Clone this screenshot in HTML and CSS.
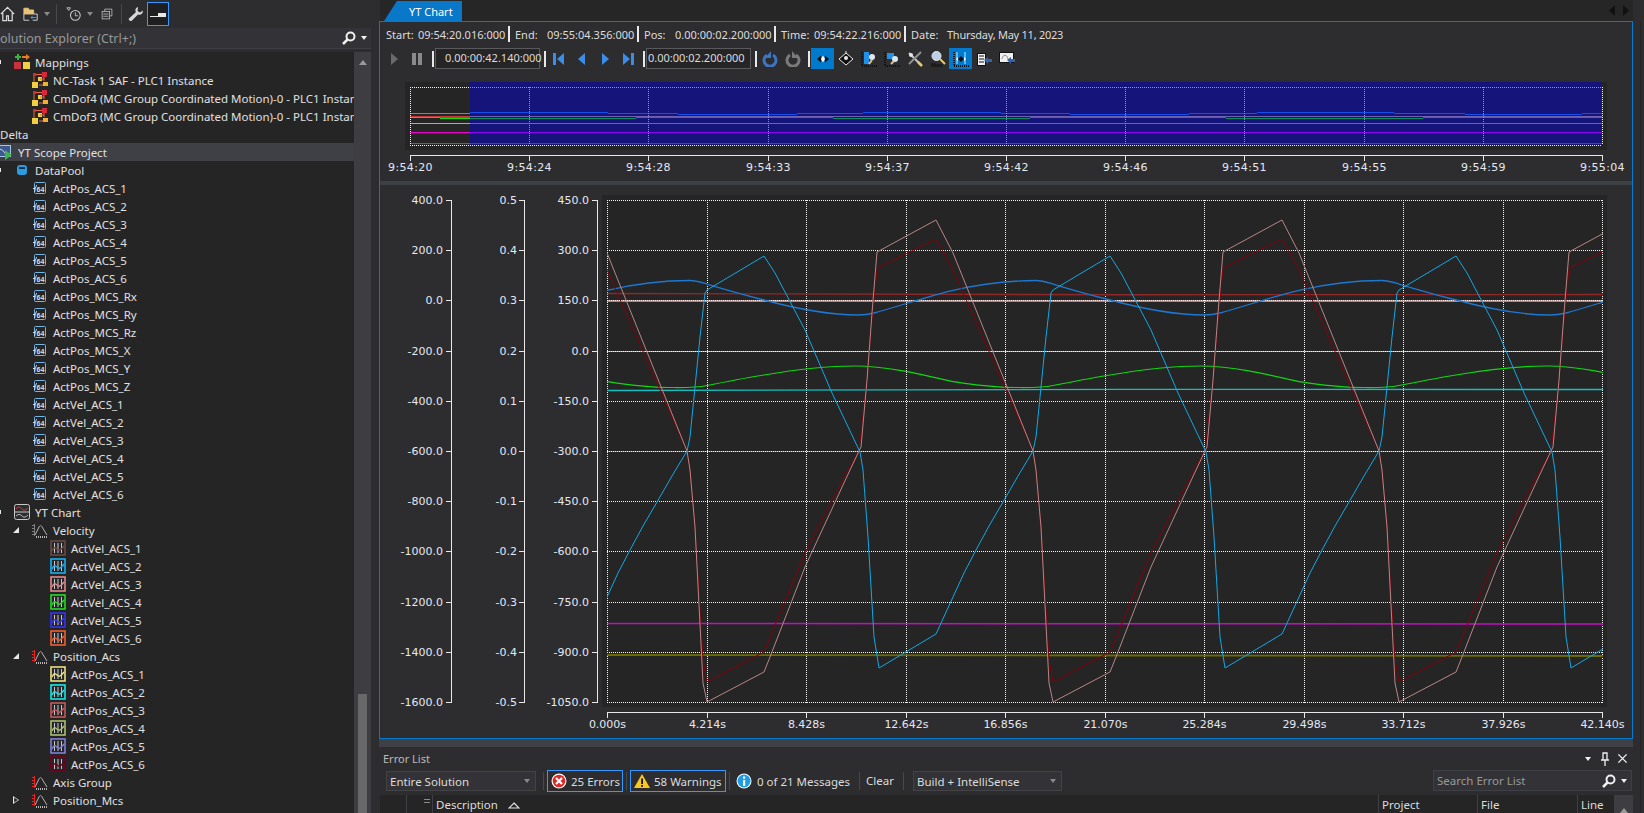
FILE: index.html
```html
<!DOCTYPE html>
<html>
<head>
<meta charset="utf-8">
<title>YT Chart</title>
<link rel="stylesheet" href="styles.css">
</head>
<body>

<svg class="defs" width="0" height="0">
	<symbol id="map" viewBox="0 0 16 16">
		<rect x="0" y="8" width="7" height="7" fill="#c8323c"/>
		<rect x="9" y="8" width="7" height="7" fill="#f0d040"/>
		<path d="M3 0h2v2h2v2H5v2H3V4H1V2h2z" fill="#3cb43c"/>
		<path d="M8 2h4V0l4 3-4 3V4H8z" fill="#f07828"/>
	</symbol>
	<symbol id="nc" viewBox="0 0 16 16">
		<rect x="0" y="10" width="6" height="6" fill="#f0d040"/>
		<rect x="10" y="0" width="5" height="5" fill="#d8283c"/>
		<rect x="1" y="1" width="3" height="3" fill="#d8283c"/>
		<rect x="6" y="5" width="4" height="4" fill="#f0d040"/>
		<rect x="11" y="10" width="5" height="4" fill="#f0b030"/>
		<path d="M4 2.5h6M8 7h4M12 5v4M2 4v6M7 13h4" stroke="#e86838" fill="none"/>
	</symbol>
	<symbol id="var" viewBox="0 0 16 16">
		<rect x="2.5" y="2.5" width="11" height="11" rx="1" fill="none" stroke="#74b4e4"/>
		<path d="M1 8.5h2M3 12c-1 1 1-7 2-7" stroke="#cfe4f4" fill="none"/>
		<text x="4.5" y="11.5" class="ico-text">64</text>
	</symbol>
	<symbol id="scope" viewBox="0 0 16 16">
		<rect x="0.5" y="1.5" width="13" height="11" fill="#3c5a8c" stroke="#a8c4e4"/>
		<path d="M1 5c4 0 6 2 8 6" stroke="#dce8f4" fill="none"/>
		<path d="M8 6l7 5-7 5z" fill="#3cb44c"/>
	</symbol>
	<symbol id="db" viewBox="0 0 16 16">
		<rect x="3" y="3" width="10" height="10" rx="3" fill="#2c9ce0"/>
		<rect x="5" y="5" width="6" height="2" fill="#12324c"/>
	</symbol>
	<symbol id="ytc" viewBox="0 0 16 16">
		<rect x="0.5" y="0.5" width="15" height="15" rx="2" fill="#2d2d30" stroke="#c8c8c8"/>
		<path d="M1 8h14" stroke="#c8c8c8"/>
		<path d="M2 5c2-3 4-2 6 0s4 1 6-1" stroke="#e83838" fill="none"/>
		<path d="M2 12c2-2 4-2 6 0s4 1 6-1" stroke="#c8c8c8" fill="none"/>
	</symbol>
	<symbol id="scale" viewBox="0 0 16 16">
		<path d="M3 13L7 5c1-2 2-2 3 0l5 8" stroke="#b4b4b4" fill="none"/>
		<path d="M4 15h11" stroke="#b4b4b4" stroke-dasharray="1 1" stroke-width="2"/>
		<path d="M2.500 2v12M0 3.500h2M0 6.500h2M0 9.500h2M0 12.500h2" stroke="currentColor" fill="none"/>
	</symbol>
	<symbol id="chan" viewBox="0 0 16 16">
		<rect x="1" y="1" width="14" height="14" fill="#26262a" stroke="currentColor" stroke-width="1.6"/>
		<path d="M4.5 3v10M8 3v10M11.5 3v10" stroke="#c8c8c8"/>
		<path d="M2 11c2-4 3-4 5-2s3 2 7-3" stroke="currentColor" stroke-width="1.4" fill="none"/>
	</symbol>
</svg>

<div class="page">

<div class="left">
	<div class="side-tools">
		<svg class="ti ti-home" viewBox="0 0 16 16"><path d="M1 8l7-7 7 7M3 7v8h4v-5h2v5h4V7" fill="none" stroke="#dcdcdc" stroke-width="1.3"/></svg>
		<svg class="ti ti-files" viewBox="0 0 18 16"><path d="M1 5V1.500h5l1 2h5V8H1z" fill="#e8c478" stroke="#e8c478"/><path d="M1 8v7h6M12 8h4v7h-5" fill="none" stroke="#dcdcdc"/><path d="M9 12h6M11 10l-2 2 2 2" fill="none" stroke="#4aa4e8"/></svg>
		<i class="drop"></i>
		<i class="side-sep"></i>
		<svg class="ti ti-hist" viewBox="0 0 18 16"><circle cx="10.500" cy="9.500" r="5.500" fill="none" stroke="#c8c8c8" stroke-width="1.200"/><path d="M10.500 6v4h3M1 1h4l-2 3z" fill="none" stroke="#c8c8c8"/></svg>
		<i class="drop"></i>
		<svg class="ti ti-copy" viewBox="0 0 16 16"><path d="M5 4V1.500h9.500v9H12" fill="none" stroke="#c8c8c8"/><rect x="1.500" y="4.500" width="10" height="10" fill="none" stroke="#c8c8c8"/><path d="M3 8h7M3 11h7" stroke="#c8c8c8"/></svg>
		<i class="side-sep side-sep-b"></i>
		<svg class="ti ti-wrench" viewBox="0 0 16 16"><path d="M10 1c-3 1-3 4-2 5L1 12.500c-1 1 1 3 2.500 2.500L10 8.500c2 1 5 0 5-4l-3 2-2.500-1.500L10 1.500z" fill="#d8d8d8"/></svg>
		<div class="pin-btn"><i class="pin-a"></i><i class="pin-b"></i></div>
	</div>
	<div class="side-search">
		<span class="side-search-text">olution Explorer (Ctrl+;)</span>
		<svg class="mag" viewBox="0 0 14 14"><circle cx="8.500" cy="5.500" r="4" fill="none" stroke="#f0f0f0" stroke-width="2"/><path d="M5.500 8.500L1 13" stroke="#f0f0f0" stroke-width="2.500"/></svg>
		<i class="drop drop-white"></i>
	</div>
	<div class="tree-wrap">
		<div class="tree">
			<div class="row"><i class="ind i1 tip"></i><svg class="ico"><use href="#map"/></svg>Mappings</div>
			<div class="row"><i class="ind i2"></i><svg class="ico"><use href="#nc"/></svg>NC-Task 1 SAF - PLC1 Instance</div>
			<div class="row"><i class="ind i2"></i><svg class="ico"><use href="#nc"/></svg>CmDof4 (MC Group Coordinated Motion)-0 - PLC1 Instance</div>
			<div class="row"><i class="ind i2"></i><svg class="ico"><use href="#nc"/></svg>CmDof3 (MC Group Coordinated Motion)-0 - PLC1 Instance</div>
			<div class="row">Delta</div>
			<div class="row selected"><i class="ind i0"></i><svg class="ico"><use href="#scope"/></svg>YT Scope Project</div>
			<div class="row"><i class="ind i1 tip"></i><svg class="ico"><use href="#db"/></svg>DataPool</div>
			<div class="row"><i class="ind i2"></i><svg class="ico"><use href="#var"/></svg>ActPos_ACS_1</div>
			<div class="row"><i class="ind i2"></i><svg class="ico"><use href="#var"/></svg>ActPos_ACS_2</div>
			<div class="row"><i class="ind i2"></i><svg class="ico"><use href="#var"/></svg>ActPos_ACS_3</div>
			<div class="row"><i class="ind i2"></i><svg class="ico"><use href="#var"/></svg>ActPos_ACS_4</div>
			<div class="row"><i class="ind i2"></i><svg class="ico"><use href="#var"/></svg>ActPos_ACS_5</div>
			<div class="row"><i class="ind i2"></i><svg class="ico"><use href="#var"/></svg>ActPos_ACS_6</div>
			<div class="row"><i class="ind i2"></i><svg class="ico"><use href="#var"/></svg>ActPos_MCS_Rx</div>
			<div class="row"><i class="ind i2"></i><svg class="ico"><use href="#var"/></svg>ActPos_MCS_Ry</div>
			<div class="row"><i class="ind i2"></i><svg class="ico"><use href="#var"/></svg>ActPos_MCS_Rz</div>
			<div class="row"><i class="ind i2"></i><svg class="ico"><use href="#var"/></svg>ActPos_MCS_X</div>
			<div class="row"><i class="ind i2"></i><svg class="ico"><use href="#var"/></svg>ActPos_MCS_Y</div>
			<div class="row"><i class="ind i2"></i><svg class="ico"><use href="#var"/></svg>ActPos_MCS_Z</div>
			<div class="row"><i class="ind i2"></i><svg class="ico"><use href="#var"/></svg>ActVel_ACS_1</div>
			<div class="row"><i class="ind i2"></i><svg class="ico"><use href="#var"/></svg>ActVel_ACS_2</div>
			<div class="row"><i class="ind i2"></i><svg class="ico"><use href="#var"/></svg>ActVel_ACS_3</div>
			<div class="row"><i class="ind i2"></i><svg class="ico"><use href="#var"/></svg>ActVel_ACS_4</div>
			<div class="row"><i class="ind i2"></i><svg class="ico"><use href="#var"/></svg>ActVel_ACS_5</div>
			<div class="row"><i class="ind i2"></i><svg class="ico"><use href="#var"/></svg>ActVel_ACS_6</div>
			<div class="row"><i class="ind i1 tip"></i><svg class="ico"><use href="#ytc"/></svg>YT Chart</div>
			<div class="row"><i class="ind i2 open"></i><svg class="ico grey"><use href="#scale"/></svg>Velocity</div>
			<div class="row"><i class="ind i3"></i><svg class="ico v1"><use href="#chan"/></svg>ActVel_ACS_1</div>
			<div class="row"><i class="ind i3"></i><svg class="ico v2"><use href="#chan"/></svg>ActVel_ACS_2</div>
			<div class="row"><i class="ind i3"></i><svg class="ico v3"><use href="#chan"/></svg>ActVel_ACS_3</div>
			<div class="row"><i class="ind i3"></i><svg class="ico v4"><use href="#chan"/></svg>ActVel_ACS_4</div>
			<div class="row"><i class="ind i3"></i><svg class="ico v5"><use href="#chan"/></svg>ActVel_ACS_5</div>
			<div class="row"><i class="ind i3"></i><svg class="ico v6"><use href="#chan"/></svg>ActVel_ACS_6</div>
			<div class="row"><i class="ind i2 open"></i><svg class="ico red"><use href="#scale"/></svg>Position_Acs</div>
			<div class="row"><i class="ind i3"></i><svg class="ico p1"><use href="#chan"/></svg>ActPos_ACS_1</div>
			<div class="row"><i class="ind i3"></i><svg class="ico p2"><use href="#chan"/></svg>ActPos_ACS_2</div>
			<div class="row"><i class="ind i3"></i><svg class="ico p3"><use href="#chan"/></svg>ActPos_ACS_3</div>
			<div class="row"><i class="ind i3"></i><svg class="ico p4"><use href="#chan"/></svg>ActPos_ACS_4</div>
			<div class="row"><i class="ind i3"></i><svg class="ico p5"><use href="#chan"/></svg>ActPos_ACS_5</div>
			<div class="row"><i class="ind i3"></i><svg class="ico p6"><use href="#chan"/></svg>ActPos_ACS_6</div>
			<div class="row"><i class="ind i2"></i><svg class="ico red"><use href="#scale"/></svg>Axis Group</div>
			<div class="row"><i class="ind i2 closed"></i><svg class="ico red"><use href="#scale"/></svg>Position_Mcs</div>
		</div>
		<div class="vscroll">
			<i class="arrow-up"></i>
			<i class="thumb"></i>
		</div>
	</div>
</div>

<div class="right">
	<div class="tabwell">
		<div class="tab">YT Chart</div>
		<div class="tab-nav"><i class="nav-l"></i><i class="nav-r"></i></div>
	</div>

	<div class="frame">
		<div class="info">
			<span class="lab lab-start">Start:</span><span class="val">09:54:20.016:000</span><i class="bar"></i>
			<span class="lab lab-end">End:</span><span class="val">09:55:04.356:000</span><i class="bar"></i>
			<span class="lab lab-pos">Pos:</span><span class="val val-pos">0.00:00:02.200:000</span><i class="bar"></i>
			<span class="lab lab-time">Time:</span><span class="val">09:54:22.216:000</span><i class="bar"></i>
			<span class="lab lab-date">Date:</span><span class="val val-date">Thursday, May 11, 2023</span>
		</div>

		<div class="tools">
			<div class="tbtn"><svg viewBox="0 0 16 16"><path d="M5 2l7 6-7 6z" fill="#6a6a6a"/></svg></div>
			<div class="tbtn"><svg viewBox="0 0 16 16"><path d="M3 2h4v12H3zM9 2h4v12H9z" fill="#8a8a8a"/></svg></div>
			<i class="bar tbar"></i>
			<div class="tbox tbox-right">0.00:00:42.140:000</div>
			<i class="bar tbar"></i>
			<div class="tbtn"><svg viewBox="0 0 16 16"><path d="M2 2h3v12H2zM13 2v12L6 8z" fill="#3a8ee8"/></svg></div>
			<div class="tbtn"><svg viewBox="0 0 16 16"><path d="M11 2v12L4 8z" fill="#3a8ee8"/></svg></div>
			<div class="tbtn"><svg viewBox="0 0 16 16"><path d="M5 2v12l7-6z" fill="#3a8ee8"/></svg></div>
			<div class="tbtn"><svg viewBox="0 0 16 16"><path d="M11 2h3v12h-3zM3 2v12l7-6z" fill="#3a8ee8"/></svg></div>
			<i class="bar tbar"></i>
			<div class="tbox">0.00:00:02.200:000</div>
			<i class="bar tbar"></i>
			<div class="tbtn"><svg viewBox="0 0 16 16"><path d="M5 4a6 6 0 1 0 6 0" fill="none" stroke="#3f74c0" stroke-width="3"/><path d="M9 0v7H3z" fill="#3f74c0"/></svg></div>
			<div class="tbtn"><svg viewBox="0 0 16 16"><path d="M11 4a6 6 0 1 1-6 0" fill="none" stroke="#7a7a7a" stroke-width="3"/><path d="M7 0v7h6z" fill="#7a7a7a"/></svg></div>
			<i class="bar tbar"></i>
			<div class="tbtn active"><svg viewBox="0 0 16 16"><path d="M2 8l4-3.500v7z" fill="#111"/><path d="M14 8l-4-3.500v7z" fill="#111"/><path d="M8 4.500l2 3.500-2 3.500-2-3.500z" fill="#fff"/></svg></div>
			<div class="tbtn"><svg viewBox="0 0 16 16"><path d="M8 2l7 6-7 6-7-6z" fill="#111" stroke="#e8e8e8"/><circle cx="8" cy="7" r="2" fill="#e8e8e8"/><path d="M8 0v3" stroke="#e8e8e8"/></svg></div>
			<div class="tbtn"><svg viewBox="0 0 16 16"><path d="M1 1v14h15" stroke="#111" stroke-dasharray="1 1" stroke-width="2" fill="none"/><rect x="3" y="1" width="5" height="12" fill="#2090e8"/><circle cx="11" cy="6" r="3" fill="#dce8f4"/><path d="M8 13l3-4" stroke="#e8c080" stroke-width="2"/></svg></div>
			<div class="tbtn"><svg viewBox="0 0 16 16"><path d="M1 1v14h15" stroke="#111" stroke-dasharray="1 1" stroke-width="2" fill="none"/><rect x="3" y="2" width="7" height="6" fill="#2090e8"/><circle cx="11" cy="8" r="3" fill="#dce8f4"/><path d="M7 13l3-3" stroke="#e8c080" stroke-width="2"/></svg></div>
			<div class="tbtn"><svg viewBox="0 0 16 16"><path d="M2 2l12 12" stroke="#c8c8c8" stroke-width="2"/><path d="M14 1L2 13" stroke="#909090" stroke-width="2"/><path d="M11 11l4 4" stroke="#e8c878" stroke-width="2.500"/><circle cx="4" cy="4" r="2" fill="#e8e8e8"/></svg></div>
			<div class="tbtn"><svg viewBox="0 0 16 16"><circle cx="6.500" cy="5" r="4.500" fill="#b8d0e8" stroke="#e8e8e8"/><path d="M10 8l5 5" stroke="#e8c878" stroke-width="2"/><text x="1" y="15.500" class="max-text">Max</text></svg></div>
			<div class="tbtn active"><svg viewBox="0 0 16 16"><path d="M1 1v14h15" stroke="#111" stroke-dasharray="1 1" stroke-width="2" fill="none"/><path d="M4 1v12M12 1v12" stroke="#80c8ff" stroke-width="1.500"/><path d="M8 5l3 3-3 3-3-3z" fill="#111"/><path d="M3 8l2-2v4zM13 8l-2-2v4z" fill="#fff"/></svg></div>
			<div class="tbtn"><svg viewBox="0 0 16 16"><rect x="1.500" y="2.500" width="8" height="12" fill="#f0f0f0" stroke="#111"/><path d="M3 5h5M3 8h5M3 11h5" stroke="#111"/><path d="M8 9l4-3v2h4v3h-4v2z" fill="#3a62a8"/></svg></div>
			<div class="tbtn"><svg viewBox="0 0 16 16"><rect x="0.500" y="1.500" width="14" height="10" fill="#f0f0f0" stroke="#111"/><path d="M3 8c1-5 5-5 6 0" fill="none" stroke="#888"/><path d="M8 9l4-3v2h4v3h-4v2z" fill="#3a62a8"/></svg></div>
		</div>

		<svg class="overview" viewBox="380 76 1252 105">
			<rect x="405" y="82" width="1202" height="68" class="plot-bg"/>
			<g class="crisp">
				<path d="M410 113.500H470" stroke="#2aa0e0"/>
				<path d="M410 116.500H470" stroke="#c83838" stroke-width="2"/>
				<path d="M410 117.500H440M440 118.500H470" stroke="#10e010" stroke-width="1.500"/>
				<path d="M410 123.500H470" stroke="#20e8d8"/>
				<path d="M410 132.500H470" stroke="#f000d0" stroke-width="1.500"/>
				<path d="M410 143.500H470" stroke="#707010"/>
				<rect x="470" y="82" width="1131" height="63" fill="#14147a"/>
				<path d="M470 112.500H608M608 113.500H678M678 114.500H797M797 113.500H863M863 112.500H1001M1001 113.500H1070M1070 114.500H1189M1189 113.500H1257M1257 112.500H1394M1394 113.500H1465M1465 114.500H1582M1582 113.500H1602" stroke="#1450f0" stroke-width="1.500"/>
				<path d="M470 116.500H1602" stroke="#7060b0" stroke-width="1.500"/>
				<path d="M470 118.500H636M833 118.500H1030M1226 118.500H1423" stroke="#089060" stroke-width="1.500"/>
				<path d="M636 117.500H833M1030 117.500H1226M1423 117.500H1602" stroke="#307890" stroke-width="1.500"/>
				<path d="M470 123.500H1602" stroke="#1880f0"/>
				<path d="M470 132.500H1602" stroke="#9000f0" stroke-width="1.500"/>
				<path d="M470 143.500H1602" stroke="#484888"/>
				<path d="M470 87.500H1601M529.500 87V145M648.500 87V145M768.500 87V145M887.500 87V145M1006.500 87V145M1125.500 87V145M1244.500 87V145M1364.500 87V145M1483.500 87V145" class="dots lilac"/>
				<path d="M410 87.500H470M410.500 87V145M410 145.500H1602M1602.500 87V145" class="dots"/>
				<path d="M410 155.500H1603M410.500 155V161M529.500 155V161M648.500 155V161M768.500 155V161M887.500 155V161M1006.500 155V161M1125.500 155V161M1244.500 155V161M1364.500 155V161M1483.500 155V161M1602.500 155V161" class="axis"/>
			</g>
			<g class="lbl mid lbl-time">
				<text x="410.500" y="171">9:54:20</text>
				<text x="529.500" y="171">9:54:24</text>
				<text x="648.500" y="171">9:54:28</text>
				<text x="768.500" y="171">9:54:33</text>
				<text x="887.500" y="171">9:54:37</text>
				<text x="1006.500" y="171">9:54:42</text>
				<text x="1125.500" y="171">9:54:46</text>
				<text x="1244.500" y="171">9:54:51</text>
				<text x="1364.500" y="171">9:54:55</text>
				<text x="1483.500" y="171">9:54:59</text>
				<text x="1602.500" y="171">9:55:04</text>
			</g>
		</svg>

		<div class="chart-split"></div>

		<svg class="main-chart" viewBox="380 185 1252 553">
			<defs>
				<clipPath id="plotclip"><rect x="607" y="195" width="996" height="512"/></clipPath>
				<path id="ticks" d="M451.500 200V703M446 200.500h6M446 250.500h6M446 300.500h6M446 351.500h6M446 401.500h6M446 451.500h6M446 501.500h6M446 551.500h6M446 602.500h6M446 652.500h6M446 702.500h6" class="axis crisp"/>
				<polyline id="pink" points="590,220 607,253 687,451 690,470 695,527 703,683 707,702 764,672 770,657 805,567 850,470 859,451 861,447 867,380 872,313 877,252 936,220"/>
				<polyline id="dred" points="590,239 607,270 687,451 690,470 695,527 703,660 707,682 764,652 805,553 848,470 859,451 867,380 872,320 877,268 936,239"/>
				<polyline id="sky" points="590,634 607,597 618,573 630,550 643,526 657,502 672,476 687,451 690,437 695,387 700,337 705,293 707,290 764,256 775,273 805,330 832,393 860,452 863,470 868,537 874,637 879,668 936,634"/>
				<path id="gwave" d="M607 381.700C625 384 645 387.500 670 387.500C680 387.500 695 388 707 385.500C725 382 745 378 764 375C790 370.500 825 366 855 366C885 366 920 374 953 381.700"/>
				<path id="bwave" d="M607 290.300C630 285 660 280.500 690 280.500C695 280.500 700 282 707 284C730 291 745 295 764 300C790 307 825 315 858 315C865 315 870 314 874 313C900 306 925 297 953 290.300"/>
			</defs>

			<rect x="602" y="195" width="1005" height="512" class="plot-bg"/>

			<use href="#ticks"/>
			<use href="#ticks" x="73"/>
			<use href="#ticks" x="146"/>

			<g class="lbl end">
				<text x="443" y="204">400.0</text><text x="443" y="254">200.0</text><text x="443" y="304">0.0</text><text x="443" y="355">-200.0</text><text x="443" y="405">-400.0</text><text x="443" y="455">-600.0</text><text x="443" y="505">-800.0</text><text x="443" y="555">-1000.0</text><text x="443" y="606">-1200.0</text><text x="443" y="656">-1400.0</text><text x="443" y="706">-1600.0</text>
				<text x="517" y="204">0.5</text><text x="517" y="254">0.4</text><text x="517" y="304">0.3</text><text x="517" y="355">0.2</text><text x="517" y="405">0.1</text><text x="517" y="455">0.0</text><text x="517" y="505">-0.1</text><text x="517" y="555">-0.2</text><text x="517" y="606">-0.3</text><text x="517" y="656">-0.4</text><text x="517" y="706">-0.5</text>
				<text x="589" y="204">450.0</text><text x="589" y="254">300.0</text><text x="589" y="304">150.0</text><text x="589" y="355">0.0</text><text x="589" y="405">-150.0</text><text x="589" y="455">-300.0</text><text x="589" y="505">-450.0</text><text x="589" y="555">-600.0</text><text x="589" y="606">-750.0</text><text x="589" y="656">-900.0</text><text x="589" y="706">-1050.0</text>
			</g>

			<path class="crisp" d="M607 301H1603" stroke="#a88c8c" stroke-width="2"/>
			<path class="crisp" d="M607 351.500H1603" stroke="#c8a070" stroke-width="1.500"/>
			<path class="crisp" d="M607 451.500H1603" stroke="#d05030"/>

			<path class="crisp dots" d="M607 200.500H1603M607 250.500H1603M607 300.500H1603M607 351.500H1603M607 401.500H1603M607 451.500H1603M607 501.500H1603M607 551.500H1603M607 602.500H1603M607 652.500H1603M607 702.500H1603"/>
			<path class="crisp dots" d="M607.500 200V703M707.500 200V703M806.500 200V703M906.500 200V703M1005.500 200V703M1105.500 200V703M1204.500 200V703M1304.500 200V703M1403.500 200V703M1503.500 200V703M1602.500 200V703"/>

			<g clip-path="url(#plotclip)" fill="none">
				<path d="M607 293.500C900 295 1300 295 1603 294.500" stroke="#902828" stroke-width="1.300"/>
				<path d="M607 390.500C900 389 1300 389.500 1603 389.500" stroke="#12c0c0" stroke-width="1.300"/>
				<path d="M607 623.500C900 624 1300 623.500 1603 624" stroke="#c010c0" stroke-width="1.500"/>
				<path d="M607 655C900 656 1300 655 1603 656" stroke="#6c6c00" stroke-width="1.800"/>

				<g class="c-green"><use href="#gwave"/><use href="#gwave" x="346"/><use href="#gwave" x="692"/></g>
				<g class="c-blue"><use href="#bwave"/><use href="#bwave" x="346"/><use href="#bwave" x="692"/></g>
				<g class="c-dred"><use href="#dred"/><use href="#dred" x="346"/><use href="#dred" x="692"/><use href="#dred" x="1038"/></g>
				<g class="c-pink"><use href="#pink"/><use href="#pink" x="346"/><use href="#pink" x="692"/><use href="#pink" x="1038"/></g>
				<g class="c-sky"><use href="#sky"/><use href="#sky" x="346"/><use href="#sky" x="692"/><use href="#sky" x="1038"/></g>
			</g>

			<path class="axis crisp" d="M607 712.500H1603M607.500 712V718M707.500 712V718M806.500 712V718M906.500 712V718M1005.500 712V718M1105.500 712V718M1204.500 712V718M1304.500 712V718M1403.500 712V718M1503.500 712V718M1602.500 712V718"/>
			<g class="lbl mid">
				<text x="607.500" y="728">0.000s</text>
				<text x="707.500" y="728">4.214s</text>
				<text x="806.500" y="728">8.428s</text>
				<text x="906.500" y="728">12.642s</text>
				<text x="1005.500" y="728">16.856s</text>
				<text x="1105.500" y="728">21.070s</text>
				<text x="1204.500" y="728">25.284s</text>
				<text x="1304.500" y="728">29.498s</text>
				<text x="1403.500" y="728">33.712s</text>
				<text x="1503.500" y="728">37.926s</text>
				<text x="1602.500" y="728">42.140s</text>
			</g>
		</svg>
	</div>

	<div class="split"></div>

	<div class="errors">
		<div class="err-title">
			<span class="err-name">Error List</span>
			<i class="grip"></i>
			<i class="drop drop-white"></i>
			<svg class="pin" viewBox="0 0 10 14"><path d="M3 1h4v7H3zM1 8h8M5 8v6" fill="none" stroke="#f0f0f0" stroke-width="1.3"/></svg>
			<svg class="close" viewBox="0 0 12 12"><path d="M1.500 1.500l9 9M10.500 1.500l-9 9" stroke="#f0f0f0" stroke-width="1.500"/></svg>
		</div>
		<div class="err-tools">
			<div class="combo combo-scope">Entire Solution<i class="drop"></i></div>
			<i class="err-sep"></i>
			<div class="toggle toggle-err">
				<svg viewBox="0 0 16 16"><circle cx="8" cy="8" r="7.500" fill="#fff"/><circle cx="8" cy="8" r="6.300" fill="#e02828"/><path d="M5 5l6 6M11 5l-6 6" stroke="#fff" stroke-width="2.200"/></svg>
				25 Errors
			</div>
			<i class="err-sep"></i>
			<div class="toggle toggle-warn">
				<svg viewBox="0 0 16 16"><path d="M8 1l8 14H0z" fill="#f8c820"/><rect x="7.200" y="5.500" width="1.800" height="5.500" fill="#111"/><rect x="7.200" y="12" width="1.800" height="1.800" fill="#111"/></svg>
				58 Warnings
			</div>
			<i class="err-sep"></i>
			<div class="msg">
				<svg viewBox="0 0 16 16"><circle cx="8" cy="8" r="7.500" fill="#fff"/><circle cx="8" cy="8" r="6.500" fill="#1c9ce4"/><rect x="7" y="7" width="2.200" height="6" fill="#fff"/><rect x="7" y="3.500" width="2.200" height="2.200" fill="#fff"/></svg>
				0 of 21 Messages
			</div>
			<i class="err-sep"></i>
			<span class="clear">Clear</span>
			<i class="err-sep"></i>
			<div class="combo combo-build">Build + IntelliSense<i class="drop"></i></div>
			<div class="err-search">
				<span>Search Error List</span>
				<svg class="mag" viewBox="0 0 14 14"><circle cx="8.500" cy="5.500" r="4" fill="none" stroke="#f0f0f0" stroke-width="2"/><path d="M5.500 8.500L1 13" stroke="#f0f0f0" stroke-width="2.500"/></svg>
				<i class="drop drop-white"></i>
			</div>
		</div>
		<div class="err-head">
			<div class="col col-a"></div>
			<div class="col col-b"><i class="filter"></i></div>
			<div class="col col-desc">Description<svg class="sort-up" viewBox="0 0 12 7"><path d="M6 1l5 5H1z" fill="none" stroke="#e0e0e0" stroke-width="1.200"/></svg></div>
			<div class="col col-proj">Project</div>
			<div class="col col-file">File</div>
			<div class="col col-line">Line</div>
			<div class="err-scroll"><i class="arrow-up"></i></div>
		</div>
	</div>
</div>

<i class="edge"></i>

</div>
</body>
</html>
```

FILE: styles.css
```css
* {
	box-sizing: border-box;
}
html, body {
	margin: 0;
	height: 100%;
	overflow: hidden;
	background: #2d2d30;
}
body {
	font: 12px "Noto Sans", "Open Sans", sans-serif;
	color: #dcdcdc;
}
i {
	display: block;
	flex: none;
}
.defs {
	position: absolute;
}
.page {
	display: flex;
	width: 1644px;
	height: 813px;
	position: relative;
}

/* left side: solution explorer */
.left {
	width: 379px;
	flex: none;
	display: flex;
	flex-direction: column;
	padding-right: 8px;
}
.side-tools {
	height: 28px;
	display: flex;
	align-items: center;
}
.ti {
	height: 16px;
	flex: none;
}
.ti-home {
	width: 15px;
}
.ti-files {
	width: 16px;
	margin-left: 8px;
}
.ti-hist {
	width: 16px;
	margin-left: 9px;
}
.ti-copy {
	width: 12px;
	margin-left: 8px;
}
.ti-wrench {
	width: 16px;
	margin-left: 6px;
}
.drop {
	width: 0;
	height: 0;
	border: 3.5px solid transparent;
	border-top: 4px solid #8a8a8a;
	border-bottom: 0;
}
.drop-white {
	border-top-color: #f0f0f0;
}
.side-tools .drop {
	margin-left: 5px;
}
.side-sep {
	width: 1px;
	height: 20px;
	background: #48484c;
	margin-left: 6px;
}
.side-sep-b {
	margin-left: 8px;
}
.pin-btn {
	width: 22px;
	height: 24px;
	margin-left: 3px;
	border: 1px solid #3399ff;
	background: #1f1f22;
	display: flex;
	align-items: flex-end;
	justify-content: center;
	padding-bottom: 8px;
	flex: none;
}
.pin-a {
	width: 8px;
	height: 1px;
	background: #e8e8e8;
}
.pin-b {
	width: 8px;
	height: 4px;
	background: #e8e8e8;
}
.side-search {
	height: 21px;
	background: #333337;
	display: flex;
	align-items: center;
	border-bottom: 1px solid #3f3f46;
}
.side-search-text {
	flex: 1;
	color: #999;
	font-size: 12.5px;
}
.mag {
	width: 14px;
	height: 14px;
	flex: none;
}
.side-search .drop {
	margin: 0 4px 0 5px;
}
.tree-wrap {
	flex: 1;
	min-height: 0;
	display: flex;
	margin-top: 3px;
	background: #252526;
}
.tree {
	flex: 1;
	min-width: 0;
	overflow: hidden;
	padding-top: 1px;
}
.row {
	height: 18px;
	display: flex;
	align-items: center;
	white-space: nowrap;
	font-size: 11.5px;
	color: #e0e0e0;
}
.selected {
	background: #3f3f46;
}
.ind {
	height: 18px;
	position: relative;
}
.i0 {
	margin-left: -3px;
}
.i1 {
	width: 14px;
}
.i2 {
	width: 32px;
}
.i3 {
	width: 50px;
}
.tip::before {
	content: "";
	position: absolute;
	left: 0;
	top: 7px;
	width: 1px;
	height: 4px;
	background: #e8e8e8;
}
.open::before {
	content: "";
	position: absolute;
	left: 13px;
	top: 6px;
	border-style: solid;
	border-width: 0 0 6px 6px;
	border-color: transparent transparent #e8e8e8 transparent;
}
.closed::before {
	content: "";
	position: absolute;
	left: 13px;
	top: 5px;
	width: 6px;
	height: 8px;
	background: #e8e8e8;
	clip-path: polygon(0 0, 100% 50%, 0 100%, 0 0, 20% 20%, 20% 80%, 80% 50%, 20% 20%);
}
.ico {
	width: 16px;
	height: 16px;
	flex: none;
	margin-right: 5px;
}
.ico-text {
	font: bold 7px "Liberation Sans", sans-serif;
	fill: #cfe4f4;
}
.max-text {
	font: bold 6px "Liberation Sans", sans-serif;
	fill: #111;
}
.grey { color: #808080; }
.red { color: #f02020; }
.v1 { color: #6a4a44; }
.v2 { color: #1ab0f0; }
.v3 { color: #e08a8a; }
.v4 { color: #22dd22; }
.v5 { color: #3535ee; }
.v6 { color: #f06030; }
.p1 { color: #e8e080; }
.p2 { color: #18e8e8; }
.p3 { color: #c05a5a; }
.p4 { color: #a8c070; }
.p5 { color: #8080d8; }
.p6 { color: #700020; }

.vscroll {
	width: 17px;
	flex: none;
	background: #3e3e42;
	position: relative;
	display: flex;
	flex-direction: column;
	align-items: center;
	padding-top: 8px;
}
.arrow-up {
	border: 4.5px solid transparent;
	border-bottom: 5px solid #999;
	border-top: 0;
}
.thumb {
	position: absolute;
	left: 4px;
	top: 642px;
	width: 9px;
	bottom: 0;
	background: #686868;
}

/* right side */
.right {
	width: 1254px;
	flex: none;
	display: flex;
	flex-direction: column;
}
.tabwell {
	height: 21px;
	background: #262627;
	display: flex;
	align-items: flex-end;
	justify-content: space-between;
	margin-left: 1px;
	flex: none;
}
.tab {
	width: 78px;
	height: 20px;
	margin-left: 4px;
	padding: 3px 0 0 25px;
	background: #0a78c8;
	color: #fff;
	font-size: 11px;
	line-height: 15px;
	clip-path: polygon(0 100%, 13px 0, 100% 0, 100% 100%);
}
.tab-nav {
	display: flex;
	gap: 8px;
	margin: 0 4px 5px 0;
}
.nav-l, .nav-r {
	width: 6px;
	height: 11px;
	background: #111;
}
.nav-l {
	clip-path: polygon(100% 0, 0 50%, 100% 100%);
}
.nav-r {
	clip-path: polygon(0 0, 100% 50%, 0 100%);
}
.frame {
	height: 718px;
	flex: none;
	border: 1px solid #007acc;
	display: flex;
	flex-direction: column;
}
.info {
	height: 26px;
	display: flex;
	align-items: center;
	padding: 0 0 2px 6px;
	font-size: 11px;
	flex: none;
}
.lab-start { width: 32px; }
.lab-end { width: 32px; }
.lab-pos { width: 31px; }
.lab-time { width: 33px; }
.lab-date { width: 36px; }
.val {
	width: 84px;
	white-space: nowrap;
}
.val-pos {
	width: 93px;
}
.val-date {
	width: 115px;
	letter-spacing: -0.25px;
}
.bar {
	width: 2px;
	height: 16px;
	background: #e8e8e8;
	margin: 0 5px 0 6px;
}
.tools {
	height: 21px;
	display: flex;
	align-items: center;
	padding-left: 2px;
	flex: none;
}
.tbtn {
	width: 23px;
	height: 21px;
	flex: none;
	display: flex;
	align-items: center;
	justify-content: center;
}
.tbtn svg {
	width: 16px;
	height: 16px;
}
.active {
	background: #007acc;
}
.tbar {
	margin: 0 1px 0 4px;
}
.tbox {
	width: 105px;
	height: 21px;
	border: 1px solid #5a5a5e;
	background: #252526;
	line-height: 18px;
	font-size: 11px;
	padding-left: 1px;
	white-space: nowrap;
	flex: none;
}
.tbox-right {
	padding-left: 9px;
}
.overview {
	display: block;
	width: 1252px;
	height: 105px;
	margin-top: 7px;
	flex: none;
}
.chart-split {
	height: 4px;
	background: #3f3f46;
	flex: none;
}
.main-chart {
	display: block;
	width: 1252px;
	height: 553px;
	flex: none;
}
.plot-bg {
	fill: #252526;
}
.crisp {
	shape-rendering: crispEdges;
}
.dots {
	fill: none;
	stroke: #f4f4f4;
	stroke-dasharray: 1 1;
	stroke-width: 1;
}
.lilac {
	stroke: #8c8cf8;
}
.axis {
	fill: none;
	stroke: #e8e8e8;
}
.lbl {
	font: 11px "DejaVu Sans", sans-serif;
	fill: #e4e8f0;
}
.lbl-time {
	letter-spacing: 0.35px;
}
.end {
	text-anchor: end;
}
.mid {
	text-anchor: middle;
}
.c-green use {
	stroke: #10d810;
	stroke-width: 1.2;
}
.c-blue use {
	stroke: #1c78d0;
	stroke-width: 1.3;
}
.c-dred use {
	stroke: #860008;
}
.c-pink use {
	stroke: #b88686;
}
.c-sky use {
	stroke: #12a8e4;
}

/* bottom error list */
.split {
	height: 8px;
	background: #3f3f46;
	flex: none;
}
.errors {
	flex: 1;
	min-height: 0;
	display: flex;
	flex-direction: column;
	font-size: 11.5px;
}
.err-title {
	height: 23px;
	display: flex;
	align-items: center;
	padding-left: 4px;
	flex: none;
}
.err-name {
	width: 54px;
	font-size: 11px;
	color: #bbb;
	flex: none;
}
.grip {
	flex: 1;
	height: 5px;
	background: radial-gradient(#4a4a4e 45%, transparent 50%) 0 0 / 2px 2px;
	margin-right: 9px;
}
.pin {
	width: 10px;
	height: 14px;
	margin-left: 9px;
	flex: none;
}
.close {
	width: 11px;
	height: 11px;
	margin: 0 5px 0 7px;
	flex: none;
}
.err-tools {
	height: 25px;
	display: flex;
	align-items: flex-start;
	flex: none;
	padding-left: 7px;
	white-space: nowrap;
}
.combo {
	height: 20px;
	margin-top: 1px;
	border: 1px solid #434346;
	background: #333337;
	display: flex;
	align-items: center;
	justify-content: space-between;
	padding: 0 5px 0 3px;
	flex: none;
}
.combo-scope {
	width: 150px;
}
.combo-build {
	width: 149px;
	margin-left: 6px;
}
.err-sep {
	width: 1px;
	height: 18px;
	margin: 2px 3px 0;
	background: #48484c;
}
.combo-scope + .err-sep {
	margin-left: 7px;
}
.toggle {
	height: 22px;
	border: 1px solid #3399ff;
	display: flex;
	align-items: center;
	gap: 4px;
	padding-left: 3px;
	flex: none;
}
.toggle svg, .msg svg {
	width: 16px;
	height: 16px;
	flex: none;
}
.toggle-err {
	width: 76px;
}
.toggle-warn {
	width: 96px;
}
.msg {
	width: 123px;
	height: 22px;
	display: flex;
	align-items: center;
	gap: 5px;
	padding-left: 3px;
	flex: none;
}
.clear {
	width: 37px;
	line-height: 22px;
	padding-left: 3px;
	flex: none;
}
.err-search {
	width: 199px;
	height: 21px;
	margin-left: 371px;
	background: #333337;
	border: 1px solid #3f3f46;
	color: #999;
	display: flex;
	align-items: center;
	padding-left: 3px;
	flex: none;
}
.err-search span {
	flex: 1;
}
.err-search .drop {
	margin: 0 4px 0 5px;
}
.err-head {
	flex: 1;
	background: #252526;
	display: flex;
	margin-left: 1px;
	line-height: 20px;
	min-height: 0;
}
.col {
	border-left: 1px solid #3f3f46;
	padding-left: 3px;
	flex: none;
	position: relative;
}
.col-a {
	margin-left: 26px;
	width: 26px;
}
.col-b {
	width: 0;
	padding: 0;
	border: 0;
}
.filter {
	position: absolute;
	left: -8px;
	top: 4px;
	width: 6px;
	height: 4px;
	border-top: 1px solid #8a8a8a;
	border-bottom: 1px solid #8a8a8a;
}
.col-desc {
	width: 946px;
}
.sort-up {
	width: 12px;
	height: 7px;
	margin-left: 10px;
}
.col-proj {
	width: 99px;
}
.col-file {
	width: 100px;
}
.col-line {
	width: 37px;
}
.err-scroll {
	width: 19px;
	background: #3e3e42;
	display: flex;
	justify-content: center;
	padding-top: 7px;
	flex: none;
}
.edge {
	position: absolute;
	left: 1640px;
	top: 21px;
	width: 1px;
	height: 792px;
	background: #252526;
}
```
